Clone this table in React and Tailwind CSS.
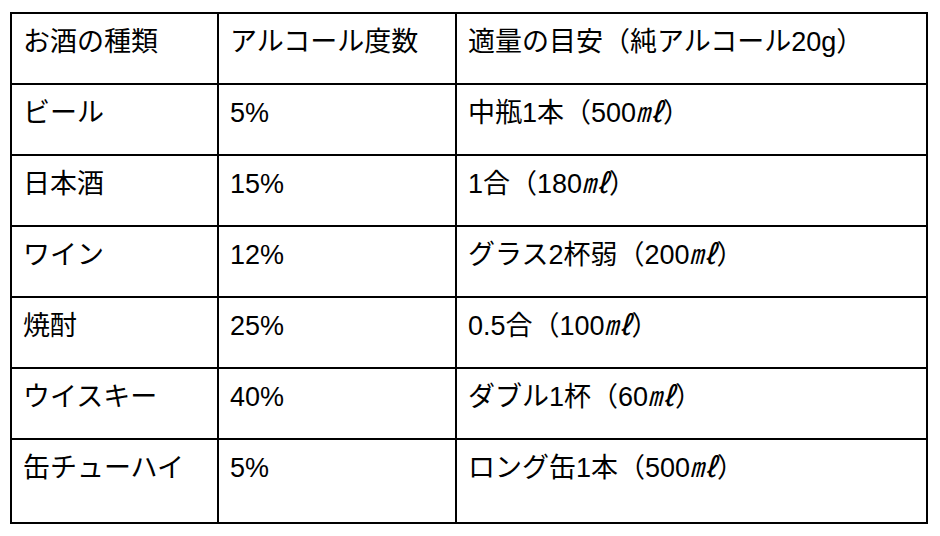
const ML = () => <span className="italic">㎖</span>;

const rows = [
  ["ビール", "5%", <>中瓶1本（500<ML />）</>],
  ["日本酒", "15%", <>1合（180<ML />）</>],
  ["ワイン", "12%", <>グラス2杯弱（200<ML />）</>],
  ["焼酎", "25%", <>0.5合（100<ML />）</>],
  ["ウイスキー", "40%", <>ダブル1杯（60<ML />）</>],
  ["缶チューハイ", "5%", <>ロング缶1本（500<ML />）</>],
];

const cell = "border-2 border-black align-top pl-[11px] pt-[10px] leading-[36px]";

const App = () => {
  return (
    <div
      className="w-[940px] h-[536px] bg-white text-black pt-[12px] pl-[10px]"
      style={{ fontFamily: '"Liberation Sans", "Noto Sans CJK JP", sans-serif' }}
    >
      <table className="border-collapse text-[27px] w-[918px] table-fixed">
        <colgroup>
          <col className="w-[207px]" />
          <col className="w-[238px]" />
          <col />
        </colgroup>
        <thead>
          <tr className="h-[71px]">
            <th className={cell + " font-normal text-left"}>お酒の種類</th>
            <th className={cell + " font-normal text-left"}>アルコール度数</th>
            <th className={cell + " font-normal text-left"}>適量の目安（純アルコール20g）</th>
          </tr>
        </thead>
        <tbody>
          {rows.map((r, i) => (
            <tr key={r[0]} className={i === rows.length - 1 ? "h-[84px]" : "h-[71px]"}>
              <td className={cell}>{r[0]}</td>
              <td className={cell}>{r[1]}</td>
              <td className={cell}>{r[2]}</td>
            </tr>
          ))}
        </tbody>
      </table>
    </div>
  );
};

export default App;
